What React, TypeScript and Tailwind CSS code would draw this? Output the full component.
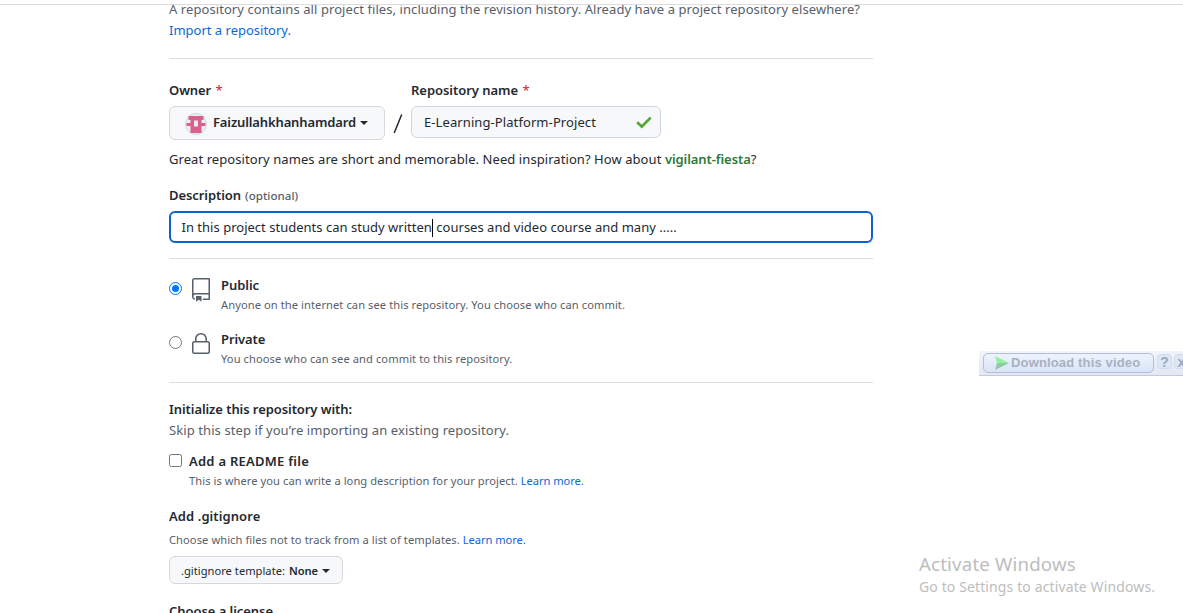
import type { ReactNode } from "react";

const link = "text-[#0969da]";
const label = "text-[13px] leading-[20px] font-semibold text-[#24292f]";
const note = "text-[11.14px] leading-[19px] text-[#57606a]";

function Caret() {
  return (
    <svg className="shrink-0" width="8" height="4" viewBox="0 0 8 4">
      <path d="M0 0h8L4 4z" fill="#24292f" />
    </svg>
  );
}

function Avatar() {
  return (
    <svg className="shrink-0" width="22" height="22" viewBox="0 0 22 22">
      <circle cx="11" cy="11" r="10.5" fill="#efefef" stroke="#d3d5d9" />
      <path
        d="M3.5 3h15v4h-2v3h4v3h-4v7h-11v-7h-4v-3h4V7h-2z"
        fill="#d9608c"
      />
      <path d="M9 7.5h4v6H9z" fill="#efefef" />
    </svg>
  );
}

function RepoIcon() {
  return (
    <svg className="shrink-0" width="24" height="24" viewBox="0 0 24 24" fill="#57606a">
      <path
        fillRule="evenodd"
        d="M3 2.75A2.75 2.75 0 015.75 0h14.5a.75.75 0 01.75.75v20.5a.75.75 0 01-.75.75h-6a.75.75 0 010-1.5h5.25v-4H6A1.5 1.5 0 004.5 18v.75c0 .716.43 1.334 1.05 1.605a.75.75 0 01-.6 1.374A3.25 3.25 0 013 18.75v-16zM19.5 1.5V15H6c-.546 0-1.059.146-1.5.401V2.75c0-.69.56-1.25 1.25-1.25H19.5z"
      />
      <path d="M7 18.25a.25.25 0 01.25-.25h5a.25.25 0 01.25.25v5.01a.25.25 0 01-.397.201l-2.206-1.604a.25.25 0 00-.294 0L7.397 23.46a.25.25 0 01-.397-.2v-5.01z" />
    </svg>
  );
}

function LockIcon() {
  return (
    <svg className="shrink-0" width="24" height="24" viewBox="0 0 24 24" fill="#57606a">
      <path
        fillRule="evenodd"
        d="M6 9V7.25C6 3.845 8.503 1 12 1s6 2.845 6 6.25V9h.5a2.5 2.5 0 012.5 2.5v8a2.5 2.5 0 01-2.5 2.5h-13A2.5 2.5 0 013 19.5v-8A2.5 2.5 0 015.5 9H6zm1.5-1.75C7.5 4.58 9.422 2.5 12 2.5c2.578 0 4.5 2.08 4.5 4.75V9h-9V7.25zm-3 4.25a1 1 0 011-1h13a1 1 0 011 1v8a1 1 0 01-1 1h-13a1 1 0 01-1-1v-8z"
      />
    </svg>
  );
}

function Radio({ checked = false }: { checked?: boolean }) {
  return (
    <span
      className={
        checked
          ? "mt-[7px] flex size-[13px] shrink-0 items-center justify-center rounded-full border border-[#0075ff]"
          : "mt-[7px] flex size-[13px] shrink-0 rounded-full border border-[#767676]"
      }
    >
      {checked && <span className="size-[7px] rounded-full bg-[#0075ff]" />}
    </span>
  );
}

function Visibility(props: {
  checked?: boolean;
  icon: ReactNode;
  title: ReactNode;
  text: ReactNode;
}) {
  return (
    <div className="flex h-[39px]">
      <Radio checked={props.checked} />
      <span className="ml-[7px] mt-[3px]">{props.icon}</span>
      <div className="ml-[8px]">
        <div className={label}>{props.title}</div>
        <div className={note}>{props.text}</div>
      </div>
    </div>
  );
}

function Required() {
  return <span className="ml-[4.5px] font-normal text-[#cf222e]">*</span>;
}

export default function App() {
  return (
    <div className="relative h-[613px] w-[1183px] overflow-hidden bg-white font-['Noto_Sans',sans-serif] whitespace-nowrap text-[#24292f]">
      <div className="h-[5px] border-b border-[#dcdcde]" />
      <main className="ml-[169px] h-[608px] w-[704px] overflow-hidden">
        <p className="-mt-[6px] text-[13px] leading-[21px] text-[#57606a]">
          <span className="tracking-[0.073px]">
            A repository contains all project files, including the revision history. Already have a
            project repository elsewhere?
          </span>
          <br />
          <a className={link}>Import a repository.</a>
        </p>
        <hr className="mt-[17px] border-[#d8dee4]" />

        <div className="mt-[21px] flex">
          <div>
            <div className={label}>
              <span className="tracking-[-0.1px]">Owner</span>
              <Required />
            </div>
            <div className="mt-[6px] flex h-[34px] w-[216px] items-center rounded-[6px] border border-[#d5d8dc] bg-[#f6f8fa] pl-[15px]">
              <span className="mt-px">
                <Avatar />
              </span>
              <span className="ml-[6px] -mt-px text-[13px] font-semibold tracking-[-0.13px]">
                Faizullahkhanhamdard
              </span>
              <span className="ml-[4px]">
                <Caret />
              </span>
            </div>
          </div>
          <svg className="mt-[34px] ml-[8px]" width="10" height="20" viewBox="0 0 10 20">
            <path d="M8.7.5L1.2 19" stroke="#24292f" strokeWidth="1.5" />
          </svg>
          <div className="ml-[8px]">
            <div className={label}>
              <span className="tracking-[-0.043px]">Repository name</span>
              <Required />
            </div>
            <div className="mt-[6px] flex h-[32px] w-[250px] items-center justify-between rounded-[6px] border border-[#d0d7de] bg-[#f6f8fa] pr-[8px] pl-[12px]">
              <span className="pt-[2px] text-[13px] tracking-[0.091px]">
                E-Learning-Platform-Project
              </span>
              <svg width="16" height="13" viewBox="0 0 16 13">
                <path d="M1.2 6.3l4.6 4.4L14.6 1.6" fill="none" stroke="#55a532" strokeWidth="2.7" />
              </svg>
            </div>
          </div>
        </div>

        <p className="mt-[9px] text-[13px] leading-[20px]">
          <span className="tracking-[0.068px]">
            Great repository names are short and memorable. Need inspiration? How about{" "}
          </span>
          <span className="font-semibold tracking-[-0.08px] text-[#2c7a36]">vigilant-fiesta</span>?
        </p>

        <div className="mt-[16px] flex">
          <span className={label}>
            <span className="tracking-[-0.072px]">Description</span>
          </span>
          <span className="ml-[4px] text-[11.5px] leading-[21px] font-medium tracking-[0.05px] text-[#57606a]">
            (optional)
          </span>
        </div>
        <div className="mt-[5px] flex h-[32px] items-center rounded-[6px] border-2 border-[#0b62d0] pt-px pl-[10.5px] text-[13px]">
          <span className="tracking-[0.015px]">In this project students can study written</span>
          <span className="-mr-px h-[18px] w-px bg-black" />
          <span className="ml-[4.5px] tracking-[0.01px]">
            courses and video course and many .....
          </span>
        </div>
        <hr className="mt-[15px] border-[#d8dee4]" />

        <div className="mt-[16px] flex flex-col gap-[15px]">
          <Visibility
            checked
            icon={<RepoIcon />}
            title={<span className="tracking-[-0.052px]">Public</span>}
            text={
              <span className="tracking-[0.076px]">
                Anyone on the internet can see this repository. You choose who can commit.
              </span>
            }
          />
          <Visibility
            icon={<LockIcon />}
            title={<span className="tracking-[-0.1px]">Private</span>}
            text={
              <span className="tracking-[0.085px]">
                You choose who can see and commit to this repository.
              </span>
            }
          />
        </div>
        <hr className="mt-[14px] border-[#d8dee4]" />

        <h2 className={`${label} mt-[16px]`}>
          <span className="tracking-[-0.073px]">Initialize this repository with:</span>
        </h2>
        <p className="mt-px text-[13px] leading-[20px] tracking-[0.089px] text-[#57606a]">
          Skip this step if you’re importing an existing repository.
        </p>

        <div className="mt-[11px] flex">
          <span className="mt-[3px] size-[13px] shrink-0 rounded-[2.5px] border border-[#767676]" />
          <div className="ml-[7px]">
            <div className={label}>
              <span className="tracking-[0.25px]">Add a README file</span>
            </div>
            <div className={note}>
              <span className="tracking-[0.065px]">
                This is where you can write a long description for your project.{" "}
              </span>
              <a className={`${link} tracking-[-0.05px]`}>Learn more.</a>
            </div>
          </div>
        </div>

        <h2 className={`${label} mt-[16px]`}>
          <span className="tracking-[0.08px]">Add .gitignore</span>
        </h2>
        <div className={`${note} mt-[4px]`}>
          <span className="tracking-[0.075px]">
            Choose which files not to track from a list of templates.{" "}
          </span>
          <a className={`${link} tracking-[-0.05px]`}>Learn more.</a>
        </div>
        <div className="mt-[7px] flex h-[28px] w-[174px] items-center rounded-[6px] border border-[#d5d8dc] bg-[#f6f8fa] pt-[2px] pl-[11px] text-[11.14px]">
          <span className="tracking-[0.025px]">.gitignore template:</span>
          <span className="ml-[4px] font-semibold tracking-[-0.07px]">None</span>
          <span className="ml-[4px]">
            <Caret />
          </span>
        </div>

        <h2 className={`${label} mt-[17px]`}>
          <span className="tracking-[-0.051px]">Choose a license</span>
        </h2>
      </main>

      <div className="absolute top-[351px] left-[979px] flex h-[25px] w-[204px] overflow-hidden border-b border-[#c3cbdc] bg-linear-to-b from-[#eff4fd] to-[#e3e7f1] font-['Liberation_Sans',Arial,sans-serif] font-bold text-[#a9b1c1]">
        <div className="mt-[2px] ml-[4px] flex h-[20px] w-[171px] shrink-0 items-center rounded-[5px] border border-[#b3bfd8] bg-linear-to-b from-[#eef4fd] to-[#d8e4f6] pl-[10px]">
          <svg className="shrink-0" width="15" height="14" viewBox="0 0 15 14">
            <path d="M1 0l14 7H3z" fill="#96efa0" />
            <path d="M15 7L1 14l2-7z" fill="#8fc9a5" />
          </svg>
          <span className="mb-[2px] ml-[2px] text-[13px] leading-none tracking-[0.15px]">
            Download this video
          </span>
        </div>
        <span className="mt-[3px] ml-[3px] flex size-[15px] shrink-0 items-center justify-center rounded-[4px] border border-[#d3dced] bg-[#dde7f6] text-[14px] leading-none text-[#9ba7bc]">
          ?
        </span>
        <span className="mt-[3px] ml-[2px] flex size-[15px] shrink-0 items-center justify-center rounded-[4px] border border-[#d3dced] bg-[#dde7f6] text-[14px] leading-none text-[#9ba7bc]">
          x
        </span>
      </div>

      <div className="absolute top-[552px] left-[919px] text-[#bdbdbd]">
        <div className="text-[18.6px] leading-[24px] tracking-[0.2px]">Activate Windows</div>
        <div className="text-[14px] leading-[22px] tracking-[0.12px]">
          Go to Settings to activate Windows.
        </div>
      </div>
    </div>
  );
}
